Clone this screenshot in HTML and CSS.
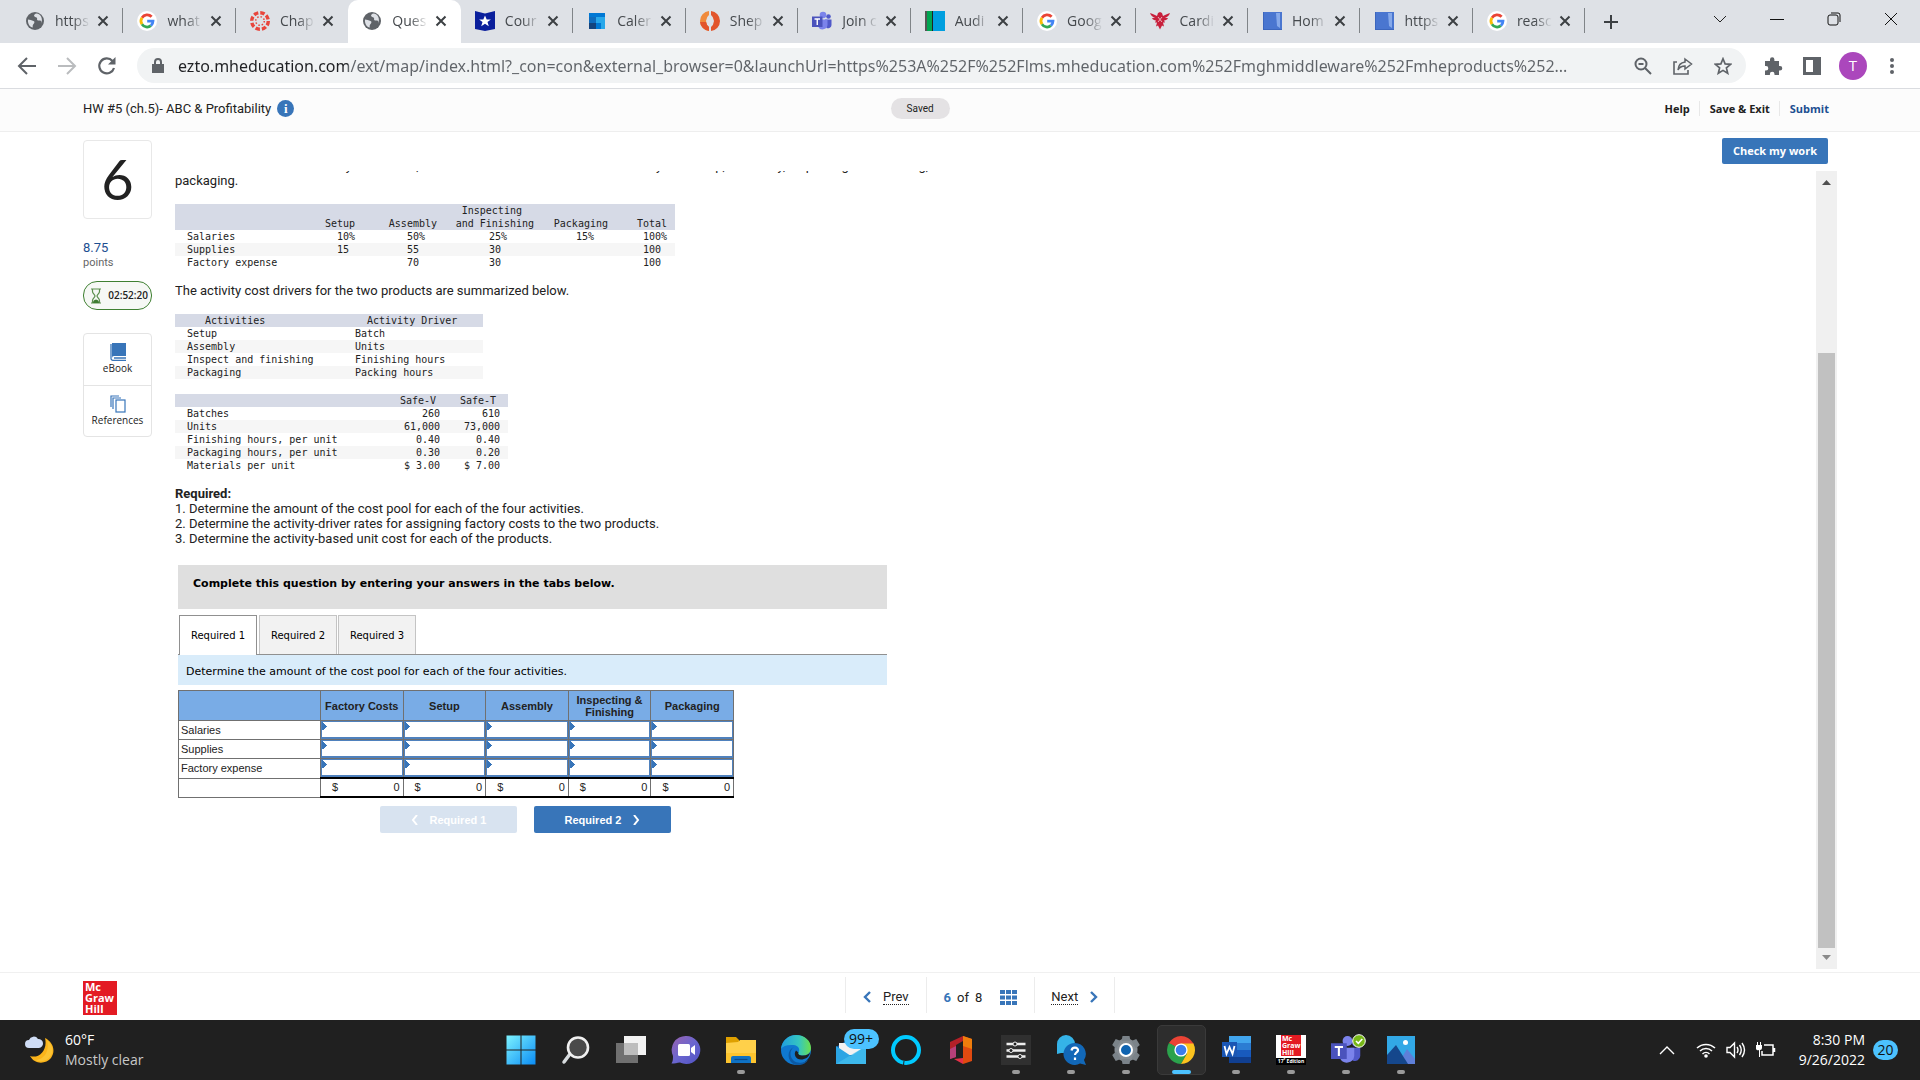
FILE: index.html
```html
<!DOCTYPE html>
<html lang="en">
<head>
	<meta charset="utf-8">
	<title>Question 6 - HW #5 (ch.5)- ABC &amp; Profitability</title>
	<link rel="stylesheet" href="styles.css">
</head>
<body>

<svg class="defs" aria-hidden="true">
	<symbol id="i-globe" viewBox="0 0 20 20"><circle cx="10" cy="10" r="9" fill="#5f6368"/><path d="M3 8.500c2 0 3.500.8 5.500 1.500 1.500.6 1 2 0 3-.8.8-1 1.800-.7 3.500-3-.6-5.300-3.500-4.800-8zM11 2.500c-1.800.8-2.500 2-1.500 3s2 .5 2.500 1.500c.4 1-.4 1.500.5 2.200 1 .7 2.500-.2 3.500.8.6.6.4 2-.2 3.200 2.200-3.800 1.200-8.700-2.800-10.400z" fill="#dee1e6"/></symbol>
	<symbol id="i-google" viewBox="0 0 20 20"><circle cx="10" cy="10" r="10" fill="#fff"/><g fill="none" stroke-width="2.800"><path d="M14.600 5.800A6 6 0 0 0 5 6.700" stroke="#ea4335"/><path d="M5 6.700a6 6 0 0 0 0 6.600" stroke="#fbbc05"/><path d="M5 13.300a6 6 0 0 0 8.900 1.300" stroke="#34a853"/><path d="M10.200 10.100H16a6 6 0 0 1-2.100 4.500" stroke="#4285f4"/></g></symbol>
	<symbol id="i-book" viewBox="0 0 20 20"><path d="M1 1h19v18H1z" fill="#4a76d0"/><path d="M14 2h4v15l-3-2z" fill="#86a9ea"/><path d="M1 1h1v17h18v1H1z" fill="#3c66bd"/></symbol>
	<symbol id="i-teams" viewBox="0 0 20 20"><circle cx="16.500" cy="5.500" r="2.300" fill="#5059c9"/><circle cx="11" cy="4" r="3.300" fill="#7b83eb"/><path d="M13 8.500h6.500v5.500a3.500 3.500 0 0 1-5 3z" fill="#5059c9"/><path d="M6 8.500h9.500V14a5 5 0 0 1-9.500 1.500z" fill="#7b83eb"/><path d="M0 5.500h10.500V16H0z" fill="#4b53bc"/><path d="M2.500 8h5.500M5.250 8v6" stroke="#fff" stroke-width="1.400"/></symbol>
	<symbol id="i-x" viewBox="0 0 12 12"><path d="M1.500 1.500l9 9m0-9l-9 9" stroke="#3c4043" stroke-width="2" fill="none"/></symbol>
</svg>

<header class="browser">
	<div class="strip">
		<div class="tabs">
			<div class="tab"><svg class="fav"><use href="#i-globe"/></svg><span class="tab-name">https</span><button class="close" aria-label="Close tab"><svg><use href="#i-x"/></svg></button></div>
			<div class="tab"><svg class="fav"><use href="#i-google"/></svg><span class="tab-name">what</span><button class="close" aria-label="Close tab"><svg><use href="#i-x"/></svg></button></div>
			<div class="tab no-line"><svg class="fav" viewBox="0 0 20 20"><circle cx="10" cy="10" r="8.300" fill="none" stroke="#e8453c" stroke-width="3.400" stroke-dasharray="4.500 2.020"/><circle cx="10" cy="10" r="4.300" fill="none" stroke="#e8453c" stroke-width="1.500" stroke-dasharray="1.500 1.877"/></svg><span class="tab-name">Chap</span><button class="close" aria-label="Close tab"><svg><use href="#i-x"/></svg></button></div>
			<div class="tab active"><svg class="fav"><use href="#i-globe"/></svg><span class="tab-name">Ques</span><button class="close" aria-label="Close tab"><svg><use href="#i-x"/></svg></button></div>
			<div class="tab"><svg class="fav" viewBox="0 0 20 20"><path d="M0 0l10 2.500L20 0v18l-10 2L0 18z" fill="#0a1f9c"/><path d="M10 4.500l1.700 4h4.200l-3.400 2.600 1.300 4.200L10 12.800l-3.800 2.500 1.300-4.200-3.400-2.600h4.200z" fill="#fff"/></svg><span class="tab-name">Cour</span><button class="close" aria-label="Close tab"><svg><use href="#i-x"/></svg></button></div>
			<div class="tab"><svg class="fav" viewBox="0 0 20 20"><path d="M2 2h16v16H2z" fill="#28a8ea"/><path d="M2 2h16v4H2z" fill="#0078d4"/><path d="M2 6h7v6H2z" fill="#0f6cbd"/><path d="M2 12h7v6H2z" fill="#14447d"/><path d="M9 12h5v6H9z" fill="#0078d4"/></svg><span class="tab-name">Caler</span><button class="close" aria-label="Close tab"><svg><use href="#i-x"/></svg></button></div>
			<div class="tab"><svg class="fav" viewBox="0 0 20 20"><path d="M9 0v4a5 8 0 0 0-3 6 5 8 0 0 0 3 6v4A10 10 0 0 1 0 10 10 10 0 0 1 9 0z" fill="#f08a3c"/><path d="M11 0v4a5 8 0 0 1 3 6 5 8 0 0 1-3 6v4a10 10 0 0 0 9-10A10 10 0 0 0 11 0z" fill="#e2552c"/><path d="M0 11a10 10 0 0 0 9 9v-4a5 8 0 0 1-3-5z" fill="#e2552c"/></svg><span class="tab-name">Shep</span><button class="close" aria-label="Close tab"><svg><use href="#i-x"/></svg></button></div>
			<div class="tab"><svg class="fav"><use href="#i-teams"/></svg><span class="tab-name">Join c</span><button class="close" aria-label="Close tab"><svg><use href="#i-x"/></svg></button></div>
			<div class="tab"><svg class="fav" viewBox="0 0 20 20"><path d="M0 0h2v20H0z" fill="#555"/><path d="M2 0h5v20H2z" fill="#00a651"/><path d="M7 0h1v20H7z" fill="#222"/><path d="M8 0h12v20H8z" fill="#009fdf"/></svg><span class="tab-name">Audi</span><button class="close" aria-label="Close tab"><svg><use href="#i-x"/></svg></button></div>
			<div class="tab"><svg class="fav"><use href="#i-google"/></svg><span class="tab-name">Goog</span><button class="close" aria-label="Close tab"><svg><use href="#i-x"/></svg></button></div>
			<div class="tab"><svg class="fav" viewBox="0 0 20 20"><path d="M0 2c3 1 5 2 7 3l1-3 2-1 2 1 1 3c2-1 4-2 7-3-1 3-3 4-5 5l3 0c-1 2-2 2-4 2.500l1 2-2 0 1 4-2-1-2 4-2-4-2 1 1-4-2 0 1-2C4 9 3 9 2 7l3 0C3 6 1 5 0 2z" fill="#c8203c"/><path d="M8 6l4 5M12 6l-4 5" stroke="#ecb0b8"/></svg><span class="tab-name">Cardi</span><button class="close" aria-label="Close tab"><svg><use href="#i-x"/></svg></button></div>
			<div class="tab"><svg class="fav"><use href="#i-book"/></svg><span class="tab-name">Hom</span><button class="close" aria-label="Close tab"><svg><use href="#i-x"/></svg></button></div>
			<div class="tab"><svg class="fav"><use href="#i-book"/></svg><span class="tab-name">https</span><button class="close" aria-label="Close tab"><svg><use href="#i-x"/></svg></button></div>
			<div class="tab"><svg class="fav"><use href="#i-google"/></svg><span class="tab-name">reasc</span><button class="close" aria-label="Close tab"><svg><use href="#i-x"/></svg></button></div>
		</div>
		<button class="new-tab" aria-label="New tab"><svg width="16" height="16" viewBox="0 0 16 16"><path d="M8 1v14M1 8h14" stroke="#3c4043" stroke-width="2"/></svg></button>
		<div class="win-buttons">
			<button aria-label="Search tabs"><svg width="14" height="14" viewBox="0 0 14 14"><path d="M1 4l6 6 6-6" fill="none" stroke="#222"/></svg></button>
			<button aria-label="Minimize"><svg width="14" height="14" viewBox="0 0 14 14"><path d="M0 7.500h14" stroke="#111"/></svg></button>
			<button aria-label="Restore"><svg width="14" height="14" viewBox="0 0 14 14"><rect x="1" y="3" width="10" height="10" rx="2" fill="none" stroke="#111"/><path d="M4 1h7a2 2 0 0 1 2 2v7" fill="none" stroke="#111"/></svg></button>
			<button aria-label="Close"><svg width="14" height="14" viewBox="0 0 14 14"><path d="M1 1l12 12M13 1L1 13" stroke="#111"/></svg></button>
		</div>
	</div>
	<div class="toolbar">
		<button class="tool" aria-label="Back"><svg width="20" height="20" viewBox="0 0 20 20"><path d="M19 10H2M10 2l-8 8 8 8" fill="none" stroke="#5f6368" stroke-width="2"/></svg></button>
		<button class="tool" aria-label="Forward"><svg width="20" height="20" viewBox="0 0 20 20"><path d="M1 10h17M10 2l8 8-8 8" fill="none" stroke="#babcbe" stroke-width="2"/></svg></button>
		<button class="tool" aria-label="Reload"><svg width="20" height="20" viewBox="0 0 20 20"><path d="M17 12a7.500 7.500 0 1 1-1.500-7" fill="none" stroke="#5f6368" stroke-width="2.200"/><path d="M18.500 1v7.500H11z" fill="#5f6368"/></svg></button>
		<div class="omnibox">
			<svg width="12" height="16" viewBox="0 0 12 16"><path d="M0 6h12v9H0z" fill="#5f6368"/><path d="M3 7V4a3 3 0 0 1 6 0v3" fill="none" stroke="#5f6368" stroke-width="2"/></svg>
			<input class="url" aria-label="Address and search bar" value="ezto.mheducation.com/ext/map/index.html?_con=con&amp;external_browser=0&amp;launchUrl=https%253A%252F%252Flms.mheducation.com%252Fmghmiddleware%252Fmheproducts%252...">
			<button aria-label="Zoom"><svg width="18" height="18" viewBox="0 0 18 18"><circle cx="7" cy="7" r="5.500" fill="none" stroke="#5f6368" stroke-width="2"/><path d="M11 11l6 6M4.500 7h5" stroke="#5f6368" stroke-width="2"/></svg></button>
			<button aria-label="Share"><svg width="20" height="18" viewBox="0 0 20 18"><path d="M4 5H1v12h14v-4" fill="none" stroke="#5f6368" stroke-width="1.600"/><path d="M12 2l6.500 5L12 12V9c-3.500 0-5.500 1-7 4 .3-4.500 3-7.500 7-8z" fill="none" stroke="#5f6368" stroke-width="1.500"/></svg></button>
			<button aria-label="Bookmark this tab"><svg width="18" height="18" viewBox="0 0 18 18"><path d="M9 1.800l2.100 5.100 5.500.4-4.200 3.600 1.300 5.400L9 13.400l-4.700 2.900 1.300-5.400L1.400 7.300l5.500-.4z" fill="none" stroke="#5f6368" stroke-width="1.700"/></svg></button>
		</div>
		<button class="ext" aria-label="Extensions"><svg width="20" height="20" viewBox="0 0 20 20"><path d="M2 5h5V3.500a2.200 2.200 0 0 1 4.400 0V5H16v5h1a2.300 2.300 0 0 1 0 4.600h-1V19h-4.500v-1a2.300 2.300 0 0 0-4.600 0v1H2v-4.500h1a2.300 2.300 0 0 0 0-4.600H2z" fill="#5f6368"/></svg></button>
		<button class="ext" aria-label="Side panel"><svg width="18" height="18" viewBox="0 0 18 18"><path d="M0 0h18v18H0zM3 3v12h7V3z" fill="#5f6368" fill-rule="evenodd"/></svg></button>
		<button class="avatar" aria-label="Profile">T</button>
		<button class="ext" aria-label="Menu"><svg width="6" height="18" viewBox="0 0 6 18"><circle cx="3" cy="3" r="2" fill="#5f6368"/><circle cx="3" cy="9" r="2" fill="#5f6368"/><circle cx="3" cy="15" r="2" fill="#5f6368"/></svg></button>
	</div>
</header>

<div class="app-bar">
	<h1 class="hw-title">HW #5 (ch.5)- ABC &amp; Profitability <span class="info">i</span></h1>
	<span class="saved">Saved</span>
	<nav class="app-links">
		<a href="#">Help</a>
		<a href="#">Save &amp; Exit</a>
		<a href="#" class="submit">Submit</a>
	</nav>
</div>

<main class="page">
	<aside class="side">
		<div class="q-number">6</div>
		<div class="points"><b>8.75</b>points</div>
		<div class="timer"><svg width="12" height="16" viewBox="0 0 12 16"><path d="M1 1h10M1 15h10M2.500 1v2.500c0 2 2.500 3 2.500 4.500s-2.500 2.500-2.500 4.500V15M9.500 1v2.500c0 2-2.500 3-2.500 4.500s2.500 2.500 2.500 4.500V15" fill="none" stroke="#5b8f4e" stroke-width="1.200"/><path d="M3 15c0-2.500 1-3 3-3.500 2 .5 3 1 3 3.500z" fill="#3f7d32"/></svg>02:52:20</div>
		<div class="resources">
			<a href="#"><svg width="16" height="18" viewBox="0 0 16 18"><path d="M2 0h14v13H4a2 2 0 0 0-2 2z" fill="#3875b9"/><path d="M1 1v14.500A1.800 1.800 0 0 0 3 17.300h13M4 15h12" fill="none" stroke="#3875b9" stroke-width="1.300"/></svg>eBook</a>
			<a href="#"><svg width="16" height="18" viewBox="0 0 16 18"><path d="M1 12V1h8M3 14V3h8" fill="none" stroke="#3875b9" stroke-width="1.200"/><rect x="6" y="5" width="9" height="12" fill="#fff" stroke="#3875b9" stroke-width="1.200"/></svg>References</a>
		</div>
	</aside>

	<div class="work">
		<div class="work-top"><button class="check">Check my work</button></div>
		<div class="scroller">
			<div class="content">
				<p class="intro">These costs are traced directly to batches, and the rest is then traced to each activity: the setup, assembly, inspecting and finishing, and<br>packaging.</p>

				<table class="mono costs">
					<colgroup><col><col><col><col><col><col></colgroup>
					<thead>
						<tr><th></th><th>Setup</th><th>Assembly</th><th>Inspecting&nbsp;&nbsp;<br>and Finishing</th><th>Packaging</th><th>Total</th></tr>
					</thead>
					<tbody>
						<tr><td>Salaries</td><td>10%</td><td>50%</td><td>25%</td><td>15%</td><td>100%</td></tr>
						<tr><td>Supplies</td><td>15&nbsp;</td><td>55&nbsp;</td><td>30&nbsp;</td><td></td><td>100&nbsp;</td></tr>
						<tr><td>Factory expense</td><td></td><td>70&nbsp;</td><td>30&nbsp;</td><td></td><td>100&nbsp;</td></tr>
					</tbody>
				</table>

				<p>The activity cost drivers for the two products are summarized below.</p>

				<table class="mono drivers">
					<colgroup><col><col></colgroup>
					<thead>
						<tr><th>Activities</th><th>Activity Driver</th></tr>
					</thead>
					<tbody>
						<tr><td>Setup</td><td>Batch</td></tr>
						<tr><td>Assembly</td><td>Units</td></tr>
						<tr><td>Inspect and finishing</td><td>Finishing hours</td></tr>
						<tr><td>Packaging</td><td>Packing hours</td></tr>
					</tbody>
				</table>

				<table class="mono products">
					<colgroup><col><col><col></colgroup>
					<thead>
						<tr><th></th><th>Safe-V</th><th>Safe-T</th></tr>
					</thead>
					<tbody>
						<tr><td>Batches</td><td>260</td><td>610</td></tr>
						<tr><td>Units</td><td>61,000</td><td>73,000</td></tr>
						<tr><td>Finishing hours, per unit</td><td>0.40</td><td>0.40</td></tr>
						<tr><td>Packaging hours, per unit</td><td>0.30</td><td>0.20</td></tr>
						<tr><td>Materials per unit</td><td>$ 3.00</td><td>$ 7.00</td></tr>
					</tbody>
				</table>

				<p><b>Required:</b><br>
				1. Determine the amount of the cost pool for each of the four activities.<br>
				2. Determine the activity-driver rates for assigning factory costs to the two products.<br>
				3. Determine the activity-based unit cost for each of the products.</p>

				<section class="answer">
					<h2>Complete this question by entering your answers in the tabs below.</h2>
					<div class="req-tabs" role="tablist">
						<button role="tab" aria-selected="true" class="current">Required 1</button>
						<button role="tab" aria-selected="false">Required 2</button>
						<button role="tab" aria-selected="false">Required 3</button>
					</div>
					<p class="prompt">Determine the amount of the cost pool for each of the four activities.</p>
					<table class="sheet">
						<colgroup><col><col><col><col><col><col></colgroup>
						<thead>
							<tr><th></th><th>Factory Costs</th><th>Setup</th><th>Assembly</th><th>Inspecting &amp; Finishing</th><th>Packaging</th></tr>
						</thead>
						<tbody>
							<tr><th>Salaries</th><td><input aria-label="Salaries, Factory Costs"></td><td><input aria-label="Salaries, Setup"></td><td><input aria-label="Salaries, Assembly"></td><td><input aria-label="Salaries, Inspecting and Finishing"></td><td><input aria-label="Salaries, Packaging"></td></tr>
							<tr><th>Supplies</th><td><input aria-label="Supplies, Factory Costs"></td><td><input aria-label="Supplies, Setup"></td><td><input aria-label="Supplies, Assembly"></td><td><input aria-label="Supplies, Inspecting and Finishing"></td><td><input aria-label="Supplies, Packaging"></td></tr>
							<tr><th>Factory expense</th><td><input aria-label="Factory expense, Factory Costs"></td><td><input aria-label="Factory expense, Setup"></td><td><input aria-label="Factory expense, Assembly"></td><td><input aria-label="Factory expense, Inspecting and Finishing"></td><td><input aria-label="Factory expense, Packaging"></td></tr>
						</tbody>
						<tfoot>
							<tr><th></th><td><div class="money"><span>$</span><span>0</span></div></td><td><div class="money"><span>$</span><span>0</span></div></td><td><div class="money"><span>$</span><span>0</span></div></td><td><div class="money"><span>$</span><span>0</span></div></td><td><div class="money"><span>$</span><span>0</span></div></td></tr>
						</tfoot>
					</table>
					<div class="req-nav">
						<button disabled><svg width="7" height="10" viewBox="0 0 7 10"><path d="M6 0L2 5l4 5" fill="none" stroke="#fff" stroke-width="2"/></svg>Required 1</button>
						<button>Required 2<svg width="7" height="10" viewBox="0 0 7 10"><path d="M1 0l4 5-4 5" fill="none" stroke="#fff" stroke-width="2"/></svg></button>
					</div>
				</section>
			</div>
			<div class="scrollbar">
				<svg width="9" height="5" viewBox="0 0 9 5"><path d="M0 5l4.500-5L9 5z" fill="#505050"/></svg>
				<div class="thumb"></div>
				<svg width="9" height="5" viewBox="0 0 9 5"><path d="M0 0l4.500 5L9 0z" fill="#8a8a8a"/></svg>
			</div>
		</div>
	</div>
</main>

<footer class="pager-bar">
	<div class="mgh">Mc<br>Graw<br>Hill</div>
	<nav class="pager">
		<a href="#" class="prev"><svg width="8" height="12" viewBox="0 0 8 12"><path d="M7 1L2 6l5 5" fill="none" stroke="#3875b9" stroke-width="2.400"/></svg><u>Prev</u></a>
		<div class="count"><b>6</b><span>of</span><span>8</span><button aria-label="All questions"><svg width="17" height="15" viewBox="0 0 17 15"><path d="M0 0h5v4H0zM6 0h5v4H6zM12 0h5v4h-5zM0 5.500h5v4H0zM6 5.500h5v4H6zM12 5.500h5v4h-5zM0 11h5v4H0zM6 11h5v4H6zM12 11h5v4h-5z" fill="#3875b9"/></svg></button></div>
		<a href="#" class="next"><u>Next</u><svg width="8" height="12" viewBox="0 0 8 12"><path d="M1 1l5 5-5 5" fill="none" stroke="#3875b9" stroke-width="2.400"/></svg></a>
	</nav>
</footer>

<div class="taskbar">
	<div class="weather">
		<svg width="30" height="30" viewBox="0 0 30 30"><path d="M20 3c8 4 11 13 6 20-5 6-16 7-21-2 9 3 18-6 15-18z" fill="#fbb41a"/><path d="M22 5c6 5 7 12 3 17-4 5-11 5-15 3 9 0 15-9 12-20z" fill="#fdd14a" opacity=".5"/><path d="M4 13a4 4 0 0 1 0-8 5 5 0 0 1 9-1 4.500 4.500 0 0 1 1 9z" fill="#cfdcf5"/></svg>
		<div><span class="temp">60°F</span><br>Mostly clear</div>
	</div>

	<div class="apps">
		<button class="app" aria-label="Start"><svg viewBox="0 0 30 30"><defs><linearGradient id="g-win" x1="0" y1="0" x2="1" y2="1"><stop offset="0" stop-color="#7df3ff"/><stop offset="1" stop-color="#0a8cf5"/></linearGradient></defs><path d="M.5.5H14.500v14H.5zM15.500.5h14v14h-14zM.5 15.500h14v14H.5zM15.500 15.500h14v14h-14z" fill="url(#g-win)"/></svg></button>
		<button class="app" aria-label="Search"><svg viewBox="0 0 30 30"><path d="M9 19l-6 8" stroke="#d8dcdf" stroke-width="3.500" stroke-linecap="round"/><circle cx="17" cy="12.500" r="10" fill="#4a4a4a" stroke="#f0f0f0" stroke-width="2.600"/></svg></button>
		<button class="app" aria-label="Task view"><svg viewBox="0 0 30 30"><path d="M8 1h22v19H8z" fill="#f2f2f2"/><path d="M0 8h22v20H0z" fill="#707070"/><path d="M8 8h14v12H8z" fill="#bdbdbd"/></svg></button>
		<button class="app" aria-label="Chat"><svg viewBox="0 0 30 30"><defs><linearGradient id="g-chat" x1="0" y1="0" x2="1" y2="1"><stop offset="0" stop-color="#9b62ae"/><stop offset=".5" stop-color="#6b66cf"/><stop offset="1" stop-color="#4f52c4"/></linearGradient></defs><path d="M15 1a14 14 0 1 1-6 26.500c-3 .5-5 1-8.500 1C2 26 2 24 2 21A14 14 0 0 1 15 1z" fill="url(#g-chat)"/><rect x="7" y="9" width="12" height="12" rx="1.500" fill="#fff"/><path d="M20 13l4-3v10l-4-3z" fill="#fff"/></svg></button>
		<button class="app open" aria-label="File Explorer"><svg viewBox="0 0 30 30"><path d="M0 2h10l3 3v6H0z" fill="#dfa000"/><path d="M0 8l12-1 2-2h16v23H0z" fill="#ffd04a"/><path d="M0 18h30v10H0z" fill="#fbbc1c" opacity=".6"/><path d="M5 28v-5q0-2 2-2h16q2 0 2 2v5z" fill="#0f72c4"/><path d="M8.500 24.500h13" stroke="#0a4a8a" stroke-width="1.200"/></svg></button>
		<button class="app" aria-label="Edge"><svg viewBox="0 0 30 30"><defs><linearGradient id="g-edge"><stop offset="0" stop-color="#1f9de0"/><stop offset=".6" stop-color="#35c6c0"/><stop offset="1" stop-color="#6be04c"/></linearGradient></defs><circle cx="15" cy="15" r="15" fill="#0f78d0"/><path d="M0 14C1 5 8 0 15 0c9 0 15 6 15 13 0 5-4 7.500-8 7.500-4 0-5.500-1.500-4.500-3 2-3 0-7-5-7.500C6 9.500 2 11 0 14z" fill="url(#g-edge)"/><path d="M13 12c-6 4-4 14 4 15.500 4 .8 8-.5 10.500-3C24 30 18 30.500 15 30 6 28 5 15 13 12z" fill="#0c59a4"/><path d="M17.500 17.500c-1 1.500.5 3 4.500 3 4 0 6-1.500 7-3-1 5-5 7-9 7-5 0-8-5-5-9z" fill="#202020"/></svg></button>
		<button class="app" aria-label="Mail"><svg viewBox="0 0 30 30"><path d="M0 12L15 3l15 9v17H0z" fill="#1264ad"/><path d="M3 8h24v12H3z" fill="#f2f2f2"/><path d="M0 11l15 10 15-10v18H0z" fill="#2ba5e4"/><path d="M0 29l30-18v18z" fill="#46c0ee" opacity=".7"/></svg><span class="badge">99+</span></button>
		<button class="app" aria-label="Alexa"><svg viewBox="0 0 30 30"><circle cx="15" cy="15" r="13" fill="none" stroke="#00caff" stroke-width="4"/><path d="M13 26l-.5 4" stroke="#202020" stroke-width="1"/></svg></button>
		<button class="app" aria-label="Office"><svg viewBox="0 0 30 30"><path d="M4 7L17 1v5l-7 4v12l-6 2z" fill="#b42028"/><path d="M4 14l6-3v11l-6 2z" fill="#b8407a"/><path d="M17 1l9 3v22l-9 3z" fill="#e04a10"/><path d="M17 1l9 3v10l-9-3z" fill="#ef7d0c"/><path d="M8 24l9-1v6z" fill="#e63048"/></svg></button>
		<button class="app open" aria-label="Audio control"><svg viewBox="0 0 30 30"><path d="M0 0h30v30H0z" fill="#303030"/><path d="M5.500 9h19M5.500 15.500h19M5.500 21.500h19" stroke="#eee" stroke-width="2.400"/><g fill="#202020" stroke="#eee"><circle cx="14" cy="9" r="2"/><circle cx="10" cy="15.500" r="2"/><circle cx="19" cy="21.500" r="2"/></g></svg></button>
		<button class="app open" aria-label="Get Help"><svg viewBox="0 0 30 30"><path d="M1 19V9a9 9 0 1 1 9 9H5z" fill="#35b3e8"/><path d="M19 8a11 11 0 0 1 9 17l2 5-6-1.500A11 11 0 1 1 19 8z" fill="#1268b8"/><path d="M15.500 15.500c.5-4 7-3.500 6.500 0-.3 2-3 2-3 4.500M19 22.500v2.500" fill="none" stroke="#fff" stroke-width="2.200"/></svg></button>
		<button class="app open" aria-label="Settings"><svg viewBox="0 0 30 30"><circle cx="15" cy="15" r="11.500" fill="#858c92"/><path d="M11.500 1h7l1 5h-9zM11.500 29h7l1-5h-9zM1.200 10L4.700 4l5 2-4.500 7.500zM25.300 4l3.500 6-4 3.500L20.300 6zM1.200 20l3.500 6 5-2-4.500-7.500zM28.800 20l-3.500 6-5-2 4.500-7.500z" fill="#7b8389"/><circle cx="15" cy="15" r="6" fill="#0f63b0" stroke="#fff" stroke-width="2"/></svg></button>
		<button class="app running" aria-label="Chrome"><svg viewBox="0 0 30 30"><path d="M15 15L2.900 8A14 14 0 0 1 27.100 8z" fill="#ea4335"/><path d="M15 15v14A14 14 0 0 1 2.900 8z" fill="#2ba24c"/><path d="M2.900 8l6.400 10.500 5.700-4zM15 29l6-10.500-7 1z" fill="#2ba24c"/><path d="M2.900 8H27.400v2H12z" fill="#ea4335"/><path d="M15 8.500H27.400A14 14 0 0 1 15 29l6-10.500z" fill="#fcc31e"/><circle cx="15" cy="15" r="6.600" fill="#fff"/><circle cx="15" cy="15" r="5.300" fill="#3b7ded"/></svg></button>
		<button class="app open" aria-label="Word"><svg viewBox="0 0 30 30"><path d="M8 1h22v7H8z" fill="#41a5ee"/><path d="M8 8h22v7H8z" fill="#2b7cd3"/><path d="M8 15h22v7H8z" fill="#185abd"/><path d="M8 22h22v6H8z" fill="#103f91"/><path d="M1 7h15v15H1z" fill="#1a56b4"/><path d="M3.500 11l2 8L8.500 12l3 7 2-8" fill="none" stroke="#fff" stroke-width="1.800"/></svg></button>
		<button class="app open" aria-label="McGraw Hill"><span class="mgh-app"><span>Mc<br>Graw<br>Hill</span><i>17<sup>e</sup> Edition</i></span></button>
		<button class="app open" aria-label="Teams"><svg viewBox="0 0 20 20"><use href="#i-teams"/></svg><svg class="tick" viewBox="0 0 14 14"><circle cx="7" cy="7" r="6.300" fill="#78b818" stroke="#fff"/><path d="M4 7l2.300 2.300L10.300 5" fill="none" stroke="#fff" stroke-width="1.600"/></svg></button>
		<button class="app open" aria-label="Photos"><svg viewBox="0 0 30 30"><path d="M1 1h28v28H1z" fill="#32a8e6"/><path d="M12 29l9-15 8 10v5z" fill="#5e7fd8"/><path d="M1 20L10 10l12 19H1z" fill="#15478c"/><circle cx="19.500" cy="7.500" r="2.500" fill="#fff"/></svg></button>
	</div>

	<div class="tray">
		<svg width="16" height="10" viewBox="0 0 16 10"><path d="M1 9l7-7 7 7" fill="none" stroke="#fff" stroke-width="1.400"/></svg>
		<div class="status">
			<svg width="20" height="16" viewBox="0 0 20 16"><g fill="none" stroke="#fff" stroke-width="1.500"><path d="M1 6a13 13 0 0 1 18 0M4 9a8.500 8.500 0 0 1 12 0M6.500 12a5 5 0 0 1 7 0"/></g><circle cx="10" cy="14" r="1.800" fill="#fff"/></svg>
			<svg width="20" height="18" viewBox="0 0 20 18"><path d="M1 6.500h3L8.500 2v14L4 11.500H1zM11 6q2 3 0 6M13.500 4q3.500 5 0 10M16 2q5 7 0 14" fill="none" stroke="#fff" stroke-width="1.400"/></svg>
			<svg width="20" height="16" viewBox="0 0 20 16"><path d="M8 3h9v10H6V9M18.500 6v4" fill="none" stroke="#fff" stroke-width="1.500"/><path d="M0 3h6v3a2 2 0 0 1-2 2v7H3V8a2 2 0 0 1-3-2zM1 0h1v3H1zM4 0h1v3H4z" fill="#fff"/></svg>
		</div>
		<div class="clock">8:30 PM<br>9/26/2022</div>
		<span class="notes">20</span>
	</div>
</div>

</body>
</html>
```
FILE: styles.css
```css
* {
	box-sizing: border-box;
}
html, body {
	height: 100%;
}
body {
	margin: 0;
	display: flex;
	flex-direction: column;
	background: #fff;
	color: #222;
	font-family: Roboto, sans-serif;
	font-size: 13px;
	line-height: 15px;
}
button {
	border: 0;
	padding: 0;
	background: none;
	font: inherit;
	color: inherit;
}
a {
	color: inherit;
	text-decoration: none;
}
svg {
	display: block;
	flex: none;
}
.defs {
	position: absolute;
	width: 0;
	height: 0;
}

/* browser frame */
.browser {
	flex: none;
	border-bottom: 1px solid #dadce0;
	font-family: "Open Sans", sans-serif;
}
.strip {
	display: flex;
	align-items: center;
	height: 43px;
	background: #dee1e6;
}
.tabs {
	display: flex;
	width: 82%;
	height: 43px;
	margin-left: 11px;
}
.tab {
	flex: 1 1 0;
	min-width: 0;
	display: flex;
	align-items: center;
	padding: 0 14px 2px 14px;
	position: relative;
}
.tab::after {
	content: "";
	position: absolute;
	right: 0;
	width: 1px;
	height: 25px;
	background: #808488;
}
.tab.active {
	background: #fff;
	border-radius: 10px 10px 0 0;
}
.tab.active::after, .tab.no-line::after {
	display: none;
}
.fav {
	width: 20px;
	height: 20px;
}
.tab-name {
	flex: 1;
	overflow: hidden;
	margin: 0 3px 0 10px;
	font-size: 14px;
	line-height: 20px;
	color: #45494d;
	white-space: nowrap;
	-webkit-mask-image: linear-gradient(to right, #000 45%, transparent 90%);
	mask-image: linear-gradient(to right, #000 45%, transparent 90%);
}
.close svg {
	width: 12px;
	height: 12px;
}
.new-tab {
	margin-left: 18px;
}
.win-buttons {
	display: flex;
	gap: 43px;
	margin-left: auto;
	padding: 0 22px 6px 0;
}
.toolbar {
	display: flex;
	align-items: center;
	height: 45px;
	padding: 0 25px 0 17px;
}
.tool {
	margin-right: 20px;
}
.omnibox {
	flex: 1;
	display: flex;
	align-items: center;
	gap: 21px;
	height: 35px;
	margin-right: 17px;
	padding: 0 14px 0 15px;
	border-radius: 18px;
	background: #f1f3f4;
}
.url {
	flex: 1;
	min-width: 0;
	height: 30px;
	margin: 0 -12px 0 -7px;
	border: 0;
	padding: 0;
	font-family: "Noto Sans", sans-serif;
	font-size: 16px;
	color: transparent;
	background: linear-gradient(to right, #202124 170px, #5f6368 170px);
	-webkit-background-clip: text;
	background-clip: text;
}
.ext {
	margin-right: 20px;
}
.ext + .avatar {
	margin: 0 22px 0 -2px;
}
.ext:last-child {
	margin: 0;
}
.avatar {
	width: 28px;
	height: 28px;
	border-radius: 50%;
	background: #ab47bc;
	color: #fff;
	font-size: 15px;
}

/* assignment header */
.app-bar {
	flex: none;
	display: grid;
	grid-template-columns: 10fr auto 11fr;
	align-items: center;
	height: 43px;
	padding: 0 82px 3px 83px;
	border-bottom: 1px solid #eee;
	background: #fcfcfc;
}
.hw-title {
	display: flex;
	align-items: center;
	gap: 6px;
	margin: 0;
	font-size: 13px;
	font-weight: 400;
}
.info {
	width: 17px;
	height: 17px;
	border-radius: 50%;
	background: #3875b9;
	color: #fff;
	font: bold 13px/17px "Liberation Serif", serif;
	text-align: center;
}
.saved {
	padding: 3px 16px;
	border-radius: 11px;
	background: #e4e2e4;
	font-size: 10px;
}
.app-links {
	display: flex;
	justify-content: flex-end;
	font-family: "Open Sans", sans-serif;
	font-size: 11px;
	font-weight: 700;
}
.app-links a {
	padding: 0 9px 0 10px;
}
.app-links a + a {
	border-left: 1px solid #e8e8e8;
}
.app-links .submit {
	color: #1d4f91;
}

/* question */
.page {
	flex: 1;
	min-height: 0;
	display: flex;
	gap: 23px;
	padding: 8px 83px 3px 83px;
}
.side {
	flex: none;
	width: 69px;
}
.q-number {
	height: 79px;
	border: 1px solid #e8e8e8;
	border-radius: 4px;
	font-family: Lato, sans-serif;
	font-size: 56px;
	line-height: 76px;
	text-align: center;
}
.points {
	margin: 21px 0 11px;
	font-size: 11px;
	color: #666;
}
.points b {
	display: block;
	font-size: 13px;
	font-weight: 400;
	color: #1d4f91;
}
.timer {
	display: flex;
	align-items: center;
	justify-content: flex-end;
	gap: 6px;
	height: 29px;
	padding-right: 3px;
	border: 1px solid #3f8032;
	border-radius: 14px;
	background: #f6f8f5;
	font-family: "Open Sans", sans-serif;
	font-size: 10px;
	font-weight: 600;
}
.resources {
	margin-top: 23px;
	border: 1px solid #e4e4e4;
	border-radius: 4px;
	font-family: "Open Sans", sans-serif;
}
.resources a {
	display: flex;
	flex-direction: column;
	align-items: center;
	height: 51px;
	padding-top: 9px;
	font-size: 10px;
}
.resources a + a {
	border-top: 1px solid #e4e4e4;
}
.work {
	flex: 1;
	display: flex;
	flex-direction: column;
	min-width: 0;
}
.work-top {
	flex: none;
	height: 31px;
	display: flex;
	align-items: flex-start;
	justify-content: flex-end;
	padding-right: 9px;
}
.check {
	height: 26px;
	margin-top: -2px;
	padding: 0 11px 2px;
	border-radius: 2px;
	background: #3875b9;
	color: #fff;
	font-family: "Open Sans", sans-serif;
	font-size: 11px;
	font-weight: 700;
}
.scroller {
	flex: 1;
	min-height: 0;
	display: flex;
}
.content {
	flex: 1;
	overflow: hidden;
}
.content p {
	margin: 0;
}
.content .intro {
	margin: -13px 0 16px;
}
.scrollbar {
	display: flex;
	flex-direction: column;
	align-items: center;
	width: 21px;
	padding: 9px 2px;
	background: #f0f0f0;
}
.thumb {
	width: 17px;
	flex: 1;
	margin: 168px 0 7px;
	background: #c1c1c1;
}

/* data tables */
.mono {
	table-layout: fixed;
	border-collapse: collapse;
	font-family: "DejaVu Sans Mono", monospace;
	font-size: 10px;
	line-height: 13px;
}
.mono th, .mono td {
	padding: 0;
	font-weight: 400;
	text-align: right;
	vertical-align: bottom;
	white-space: nowrap;
}
.mono th {
	background: #d6dae6;
}
.mono td:first-child {
	padding-left: 12px;
	text-align: left;
}
.mono tbody tr:nth-child(even) {
	background: #f6f6f6;
}
.costs {
	width: 500px;
	margin-bottom: 14px;
}
.costs col:nth-child(1) { width: 120px; }
.costs col:nth-child(2) { width: 60px; }
.costs col:nth-child(3) { width: 82px; }
.costs col:nth-child(4) { width: 97px; }
.costs col:nth-child(5) { width: 74px; }
.costs td:nth-child(3) { padding-right: 12px; }
.costs td:nth-child(4) { padding-right: 27px; }
.costs td:nth-child(5) { padding-right: 14px; }
.costs th:last-child, .costs td:last-child { padding-right: 8px; }
.drivers {
	width: 308px;
	margin: 16px 0 15px;
}
.drivers col:first-child { width: 180px; }
.drivers td:last-child { text-align: left; }
.drivers th:first-child {
	padding-left: 30px;
	text-align: left;
}
.drivers th:last-child {
	padding-left: 12px;
	text-align: left;
}
.products {
	width: 333px;
	margin-bottom: 14px;
}
.products col:first-child { width: 205px; }
.products col:nth-child(2) { width: 60px; }
.products td:nth-child(3) { padding-right: 8px; }
.products th:nth-child(2) { padding-right: 4px; }
.products th:nth-child(3) { padding-right: 12px; }

/* answer area */
.answer {
	width: 709px;
	margin: 19px 0 0 3px;
	font-family: "DejaVu Sans", sans-serif;
	font-size: 11px;
	color: #000;
}
.answer h2 {
	height: 44px;
	margin: 0 0 6px;
	padding: 11px 15px;
	background: #dfdfdf;
	font-size: 11px;
	line-height: 15px;
}
.req-tabs {
	display: flex;
	gap: 1px;
	padding-left: 1px;
	border-bottom: 1px solid #909090;
}
.req-tabs button {
	width: 78px;
	height: 39px;
	border: 1px solid #c4c4c4;
	border-bottom: 0;
	background: #f2f2f2;
	font-size: 10px;
}
.req-tabs .current {
	height: 40px;
	margin: 0 1px -1px 0;
	border-color: #909090;
	background: #fff;
}
.content .prompt {
	margin-bottom: 5px;
	padding: 9px 8px 6px;
	background: #d9ecfa;
}
.sheet {
	width: 556px;
	table-layout: fixed;
	border-collapse: collapse;
	font-family: "Liberation Sans", sans-serif;
	font-size: 11px;
	line-height: 12px;
	color: #222;
}
.sheet col:first-child {
	width: 142px;
}
.sheet th, .sheet td {
	height: 18px;
	border: 1px solid #707070;
	padding: 0;
}
.sheet thead th {
	height: 30px;
	background: #79ace6;
}
.sheet tbody th {
	padding-left: 2px;
	font-weight: 400;
	text-align: left;
}
.sheet input {
	display: block;
	width: 100%;
	height: 18px;
	border: 2px solid #4f81bd;
	border-width: 1px 1px 2px 1px;
	padding: 0 4px;
	background: #fff conic-gradient(from 225deg at 5px 4px, #3875b9 90deg, transparent 0) no-repeat 0 0 / 5px 8px;
	font: inherit;
	text-align: right;
}
.sheet tfoot td {
	height: 19px;
	border-top: 2px solid #000;
	border-bottom: 2px solid #000;
}
.money {
	display: flex;
	justify-content: space-between;
	padding: 0 3px 1px 11px;
}
.req-nav {
	display: flex;
	gap: 17px;
	padding: 8px 0 0 202px;
}
.req-nav button {
	display: flex;
	align-items: center;
	justify-content: center;
	gap: 12px;
	width: 137px;
	height: 27px;
	border-radius: 2px;
	background: #3875b9;
	color: #fff;
	font: bold 11px "Liberation Sans", sans-serif;
}
.req-nav button:disabled {
	background: #d8e3f0;
}

/* footer */
.pager-bar {
	flex: none;
	display: grid;
	grid-template-columns: 19fr auto 18fr;
	height: 48px;
	padding: 4px 83px 5px;
	border-top: 1px solid #f0f0f0;
}
.mgh {
	align-self: end;
	width: 34px;
	padding: 0 2px 1px;
	background: #e31b23;
	color: #fff;
	font-family: "Open Sans", sans-serif;
	font-size: 11px;
	line-height: 11px;
	font-weight: 700;
}
.pager {
	display: flex;
	margin-bottom: 2px;
	border-right: 1px solid #ececec;
}
.pager > * {
	display: flex;
	align-items: center;
	padding-top: 4px;
	border-left: 1px solid #ececec;
}
.pager u {
	text-decoration: none;
	border-bottom: 1px dotted #222;
}
.pager .prev {
	gap: 12px;
	padding-left: 17px;
	padding-right: 17px;
}
.pager .count {
	gap: 6px;
	padding-left: 17px;
	padding-right: 17px;
}
.count b {
	color: #3875b9;
}
.count button {
	margin-left: 12px;
}
.pager .next {
	gap: 12px;
	padding-left: 16px;
	padding-right: 16px;
}

/* taskbar */
.taskbar {
	flex: none;
	display: grid;
	grid-template-columns: 1fr auto 1fr;
	align-items: center;
	height: 60px;
	background: #202020;
	color: #fff;
	font-family: "Open Sans", sans-serif;
	font-size: 14px;
	line-height: 20px;
}
.weather {
	display: flex;
	align-items: center;
	gap: 10px;
	padding-left: 25px;
	color: #c8c8c8;
}
.temp {
	color: #fff;
}
.apps {
	display: flex;
	padding-left: 2px;
}
.app {
	position: relative;
	display: flex;
	align-items: center;
	justify-content: center;
	width: 55px;
	height: 60px;
}
.app > svg {
	width: 30px;
	height: 30px;
}
.open::after, .running::after {
	content: "";
	position: absolute;
	left: 23px;
	bottom: 6px;
	width: 8px;
	height: 4px;
	border-radius: 2px;
	background: #9a9a9a;
}
.running::before {
	content: "";
	position: absolute;
	inset: 5px 3px;
	border: 1px solid #3a3a3a;
	border-radius: 5px;
	background: #2d2d2d;
}
.running > svg {
	position: relative;
}
.running::after {
	left: 18px;
	width: 19px;
	background: #4cc2ff;
}
.badge {
	position: absolute;
	top: 9px;
	left: 20px;
	width: 35px;
	border-radius: 10px;
	background: #4cc2ff;
	color: #111;
}
.app .tick {
	position: absolute;
	top: 14px;
	left: 33px;
	width: 14px;
	height: 14px;
}
.mgh-app {
	width: 30px;
	height: 30px;
	background: #fff;
	color: #fff;
	font-size: 7px;
	font-weight: 700;
	line-height: 7px;
	text-align: left;
}
.mgh-app span {
	display: block;
	width: 20px;
	margin: 0 auto;
	padding-left: 1px;
	background: #e31b23;
}
.mgh-app i {
	display: block;
	margin-top: 2px;
	background: #000;
	font-size: 5px;
	font-style: normal;
	text-align: center;
}
.mgh-app sup {
	line-height: 0;
	font-size: 3px;
}
.tray {
	display: flex;
	align-items: center;
	justify-content: flex-end;
	gap: 21px;
	padding-right: 22px;
}
.status {
	display: flex;
	align-items: center;
	gap: 10px;
	margin-right: 2px;
}
.clock {
	text-align: right;
}
.notes {
	width: 25px;
	height: 20px;
	margin-left: -13px;
	border-radius: 10px;
	background: #4cc2ff;
	color: #111;
	text-align: center;
}
```
